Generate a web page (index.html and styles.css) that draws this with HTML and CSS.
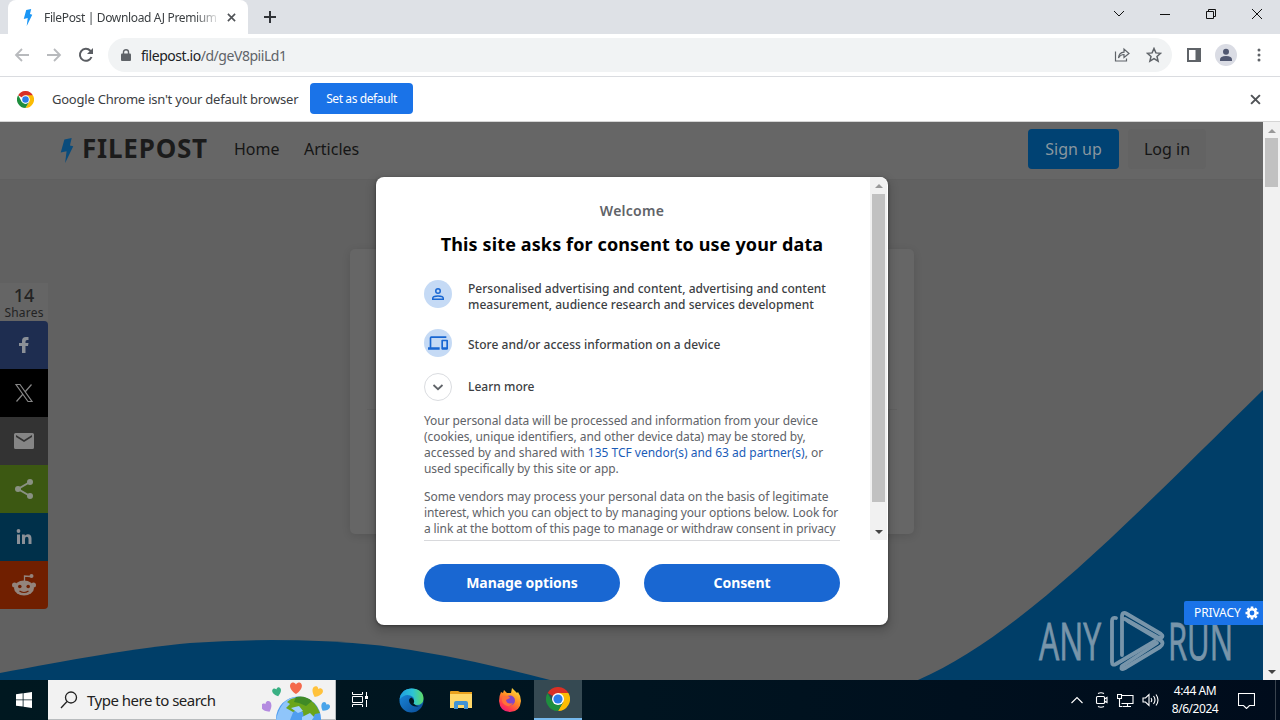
FILE: index.html
```html
<!DOCTYPE html>
<html lang="en">
<head>
<meta charset="utf-8">
<title>FilePost | Download AJ Premium</title>
<link rel="stylesheet" href="styles.css">
</head>
<body>
<svg class="defs" width="0" height="0" aria-hidden="true">
  <defs>
    <symbol id="bolt" viewBox="0 0 12 24"><path d="M3.5 1.5 10.5 0 8.8 7.2 12 8 4.2 24 5.6 12.8 0 14z"/></symbol>
    <symbol id="cross" viewBox="0 0 10 10"><path d="M1 1l8 8M9 1l-8 8"/></symbol>
    <symbol id="chrome" viewBox="0 0 24 24">
      <path fill="#d93025" d="M12 12 1.6 6A12 12 0 0 1 22.4 6z"/>
      <path fill="#fbbc04" d="M12 12V6h10.4A12 12 0 0 1 12 24l5.2-9z"/>
      <path fill="#1e8e3e" d="M1.6 6 6.8 15 12 18l5.2-3L12 24A12 12 0 0 1 1.6 6z"/>
      <circle cx="12" cy="12" r="6" fill="#fff"/>
      <circle cx="12" cy="12" r="4.6" fill="#2b7de9"/>
    </symbol>
  </defs>
</svg>
<div class="screen">
  <header class="tabstrip">
    <div class="tab">
      <svg class="tab-bolt" width="10" height="17"><use href="#bolt"/></svg>
      <span class="tab-title">FilePost | Download AJ Premium</span>
      <svg class="tab-close" width="9" height="9"><use href="#cross"/></svg>
    </div>
    <svg class="new-tab" width="12" height="12" viewBox="0 0 12 12"><path d="M6 0v12M0 6h12"/></svg>
    <div class="window-buttons">
      <svg width="12" height="12" viewBox="0 0 12 12"><path d="M1 3l5 5 5-5"/></svg>
      <svg width="12" height="12" viewBox="0 0 12 12"><path d="M1 6.5h10"/></svg>
      <svg width="12" height="12" viewBox="0 0 12 12"><path d="M1.5 3.5h7v7h-7zM3.5 3.500v-2h7v7h-2"/></svg>
      <svg width="12" height="12" viewBox="0 0 12 12"><path d="M1 1l10 10M11 1 1 11"/></svg>
    </div>
  </header>
  <nav class="toolbar">
    <svg class="nav-arrow" width="16" height="16" viewBox="0 0 16 16"><path d="M15 8H2M8 2 2 8l6 6"/></svg>
    <svg class="nav-arrow" width="16" height="16" viewBox="0 0 16 16"><path d="M1 8h13M8 2l6 6-6 6"/></svg>
    <svg class="reload" width="16" height="16" viewBox="0 0 16 16"><path d="M13.500 10a6 6 0 1 1-1.200-6.300L14 5.500"/><path class="reload-tip" d="M15 1v6H9z"/></svg>
    <div class="omnibox">
      <svg width="10" height="12" viewBox="0 0 10 12"><path fill="#5f6368" d="M1 4.500h8q1 0 1 1V11q0 1-1 1H1q-1 0-1-1V5.500q0-1 1-1z"/><path fill="none" stroke="#5f6368" stroke-width="1.400" d="M2.500 5V3a2.500 2.300 0 0 1 5 0v2"/></svg>
      <span class="url"><b>filepost.io</b>/d/geV8piiLd1</span>
      <svg class="share" width="16" height="16" viewBox="0 0 16 16"><path d="M1.500 4.500v9.500h11V11.500M4.500 11Q5 5.500 10 5.200V2l5 4.500-5 4V7.500Q6.500 7.500 4.500 11z"/></svg>
      <svg class="star" width="16" height="16" viewBox="0 0 16 16"><path d="M8 1.500l1.900 4.400 4.700.4-3.600 3.200 1.100 4.700L8 11.700l-4.100 2.500L5 9.500 1.400 6.300l4.700-.4z"/></svg>
    </div>
    <svg class="panel" width="14" height="14" viewBox="0 0 14 14"><path fill="#5f6368" fill-rule="evenodd" d="M0 0h14v14H0zM2 2v10h6.500V2z"/></svg>
    <svg class="avatar" width="22" height="22" viewBox="0 0 22 22"><circle cx="11" cy="11" r="11" fill="#dadce4"/><circle cx="11" cy="7.800" r="3" fill="#505770"/><path fill="#505770" d="M5 17v-1.500q0-3.500 6-3.500t6 3.500V17z"/></svg>
    <svg class="kebab" width="4" height="14" viewBox="0 0 4 14"><circle cx="2" cy="2" r="1.500"/><circle cx="2" cy="7" r="1.500"/><circle cx="2" cy="12" r="1.500"/></svg>
  </nav>
  <div class="infobar">
    <svg width="17" height="17"><use href="#chrome"/></svg>
    <span class="infobar-text">Google Chrome isn't your default browser</span>
    <button class="default-button"><span>Set as default</span></button>
    <svg class="infobar-close" width="11" height="11"><use href="#cross"/></svg>
  </div>

  <div class="viewport">
    <main class="page">
      <svg class="waves" width="1263" height="558" viewBox="0 122 1263 558">
        <path fill="#003e68" d="M0 673C70 660 135 648 190 643Q285 636 380 645.500Q460 656 550 680H0z"/>
        <path fill="#003e68" d="M918 680C1020 635 1120 530 1263 390V680z"/>
      </svg>
      <div class="site-nav">
        <svg class="site-bolt" width="14" height="25"><use href="#bolt"/></svg>
        <strong class="brand">FILEPOST</strong>
        <a class="home">Home</a>
        <a class="articles">Articles</a>
        <a class="signup"><span>Sign up</span></a>
        <a class="login"><span>Log in</span></a>
      </div>
      <div class="card"><div class="card-top"></div></div>

      <aside class="share-rail">
        <div class="share-count"><b>14</b><span>Shares</span></div>
        <div class="rail-item facebook"><svg width="24" height="24" viewBox="0 0 24 24"><path d="M10 20v-7H7v-3h3V8q0-4 4-4h2.500v3H15q-1.500 0-1.500 1.500V10h3l-.5 3h-2.500v7z"/></svg></div>
        <div class="rail-item x"><svg width="24" height="24" viewBox="0 0 24 24"><path fill="none" stroke="#868686" stroke-width="1.200" d="M4 3.500h4L20 20.500h-4zM19.500 3.500 13 11M11 13l-6.500 7.500"/></svg></div>
        <div class="rail-item mail"><svg width="24" height="24" viewBox="0 0 24 24"><path fill-rule="evenodd" d="M3.500 4h17q1.500 0 1.500 1.500v13q0 1.500-1.500 1.500h-17Q2 20 2 18.500v-13Q2 4 3.500 4zM4 6v2l8 5 8-5V6l-8 5z"/></svg></div>
        <div class="rail-item sharethis"><svg width="24" height="24" viewBox="0 0 24 24"><path fill="none" stroke="#8a9183" stroke-width="2" d="M18 5 6 12l12 7"/><circle cx="18" cy="5" r="3"/><circle cx="6" cy="12" r="3"/><circle cx="18" cy="19" r="3"/></svg></div>
        <div class="rail-item linkedin"><svg width="24" height="24" viewBox="0 0 24 24"><circle cx="6.500" cy="6" r="1.900"/><path d="M5 9.500h3V19H5zM10 9.500h2.800v1.300q1-1.600 3-1.600 3.700 0 3.700 4.300V19h-3v-5q0-2.300-1.700-2.300-1.800 0-1.800 2.300v5h-3z"/></svg></div>
        <div class="rail-item reddit"><svg width="24" height="24" viewBox="0 0 24 24"><path fill="none" stroke="#93847c" stroke-width="1.300" d="M12.500 9V3l6 .5"/><circle cx="19.500" cy="3" r="2"/><circle cx="2.500" cy="12" r="2.500"/><circle cx="21.500" cy="12" r="2.500"/><ellipse cx="12" cy="15" rx="10" ry="7.500"/><g fill="#701f00"><circle cx="7.800" cy="13.500" r="1.800"/><circle cx="16.200" cy="13.500" r="1.800"/></g><path fill="none" stroke="#701f00" stroke-width="1.200" d="M7.500 18q4.500 3 9 0"/></svg></div>
      </aside>

      <svg class="watermark" width="200" height="70" viewBox="1035 605 200 70">
        <g font-family="Open Sans" font-size="51" fill="#7895aa" stroke="#7895aa" stroke-width=".9">
          <text x="1039" y="659.500" textLength="62" lengthAdjust="spacingAndGlyphs">ANY</text>
          <text x="1168" y="659.500" textLength="65" lengthAdjust="spacingAndGlyphs">RUN</text>
        </g>
        <g fill="none" stroke="#7895aa" stroke-width="3.800" stroke-linejoin="round" stroke-linecap="round">
          <path d="M1116 618q-4-1-4 3v41q0 4 4 2l39-23"/>
          <path d="M1122 655v-38q0-6 5-3l34 20q3 2 0 4l-4-1-32-18"/>
          <path d="M1125 668l35-21q5-4 0-7l-32-19"/>
          <path d="M1125 668q-5 3-3-2l35-23"/>
        </g>
      </svg>
      <a class="privacy"><span>PRIVACY</span><svg width="14" height="14" viewBox="0 0 14 14"><circle cx="7" cy="7" r="3.700" fill="none" stroke="#fff" stroke-width="2.600"/><g stroke="#fff" stroke-width="2.600"><path d="M7 .5v2M7 11.500v2M.5 7h2M11.500 7h2M2.400 2.400l1.400 1.400M10.200 10.200l1.400 1.400M11.600 2.400l-1.400 1.400M3.800 10.200l-1.400 1.400"/></g></svg></a>

      <section class="dialog">
        <div class="dialog-scroll">
          <div class="dialog-body">
            <p class="welcome"><span>Welcome</span></p>
            <h1><span>This site asks for consent to use your data</span></h1>
            <ul class="purposes">
              <li class="two-line"><i class="disc"><svg width="18" height="18" viewBox="0 0 24 24"><path fill="none" stroke="#1967d2" stroke-width="2" d="M12 5a3 3 0 1 1 0 6 3 3 0 0 1 0-6zM5 19v-1.500q0-3 7-3t7 3V19z"/></svg></i>
                <span>Personalised advertising and content, advertising and content<br>measurement, audience research and services development</span></li>
              <li class="store"><i class="disc"><svg width="20" height="20" viewBox="0 0 24 24"><path fill="#1967d2" d="M4 6h18V4H4q-2 0-2 2v11H0v3h14v-3H4zM23 8h-6q-1 0-1 1v10q0 1 1 1h6q1 0 1-1V9q0-1-1-1zm-1 9h-4v-7h4z"/></svg></i><span>Store and/or access information on a device</span></li>
              <li class="learn"><i class="disc outline"><svg width="12" height="12" viewBox="0 0 12 12"><path fill="none" stroke="#5f6368" stroke-width="1.800" d="M1.500 4 6 8.200 10.500 4"/></svg></i><span>Learn more</span></li>
            </ul>
            <p class="legal">Your personal data will be processed and information from your device<br>(cookies, unique identifiers, and other device data) may be stored by,<br><span class="normal">accessed by and shared with <a>135 TCF vendor(s) and 63 ad partner(s)</a>, or</span><br>used specifically by this site or app.</p>
            <p class="legal">Some vendors may process your personal data on the basis of legitimate<br><span class="snug">interest, which you can object to by managing your options below. Look for</span><br><span class="snug">a link at the bottom of this page to manage or withdraw consent in privacy</span></p>
          </div>
          <div class="scrollbar inner"><i class="up"></i><i class="thumb"></i><i class="down"></i></div>
        </div>
        <div class="actions"><button><span>Manage options</span></button><button><span>Consent</span></button></div>
      </section>
    </main>
    <div class="scrollbar outer"><i class="up"></i><i class="thumb"></i><i class="down"></i></div>
  </div>

  <footer class="taskbar">
    <div class="start"><svg width="16" height="16" viewBox="0 0 16 16"><path fill="#fff" d="M0 2.300 6.700 1.300V7.500H0zM7.500 1.200 16 0v7.500H7.500zM0 8.300h6.700v6.300L0 13.700zM7.500 8.300H16V16l-8.500-1.200z"/></svg></div>
    <div class="search">
      <svg width="18" height="18" viewBox="0 0 18 18"><circle cx="11" cy="6.500" r="5.500"/><path d="M7 10.500l-6 6.500"/></svg>
      <span>Type here to search</span>
      <svg class="globe" width="74" height="40" viewBox="0 0 74 40">
        <defs><path id="heart" d="M0 6C-9 0-6-6-2.500-5.500-1-5.300 0-3.500 0-3.500S1-5.300 2.500-5.500C6-6 9 0 0 6z"/></defs>
        <circle cx="36.500" cy="39" r="22.500" fill="#4f9df0"/>
        <path fill="#8fc5fa" d="M15 36q5-17 18-19l-5 8 4 5-4 10H14z"/>
        <path fill="#6aa51c" d="M29 19q17-6 26 8l3 6-5 1-3 6h-8l-1-8-6-2-4 2-7-4 4-4-3-2z"/>
        <path fill="#3f8a26" d="M34 17q9-2 16 4l-6 5-7-3-5-1z"/>
        <path fill="#9fd0ff" d="M29 28l8-2 4 5-5 2zM40 37l8-4 4 4-2 3h-10z"/>
        <use href="#heart" fill="#f4694c" transform="translate(34 8)"/>
        <use href="#heart" fill="#3ab083" transform="translate(15 12) rotate(-15) scale(.75)"/>
        <use href="#heart" fill="#ffc23c" transform="translate(55 12) rotate(25) scale(.9)"/>
        <use href="#heart" fill="#b48be0" transform="translate(5 27) rotate(-28) scale(.9)"/>
        <use href="#heart" fill="#48a4ea" transform="translate(63 27) rotate(32) scale(.75)"/>
      </svg>
    </div>
    <div class="apps">
      <div class="app"><svg width="18" height="18" viewBox="0 0 18 18"><path fill="none" stroke="#fff" d="M1.500 1v2.500h10V1M1.500 16v-2.500h10V16M1.500 5.500h10v6h-10zM15.500 1v4M15.500 9v7"/><path fill="#fff" d="M14 5h3v3h-3z"/></svg></div>
      <div class="app edge"><svg width="25" height="25" viewBox="0 0 25 25"><defs><linearGradient id="edge-top" x1="0" x2="1"><stop stop-color="#1f9de0"/><stop offset=".55" stop-color="#2cc3d6"/><stop offset="1" stop-color="#5edb66"/></linearGradient><linearGradient id="edge-low" x1="0" x2="1" y2="1"><stop stop-color="#1a8ce0"/><stop offset="1" stop-color="#0a4a94"/></linearGradient></defs><circle cx="12.500" cy="12.500" r="12" fill="url(#edge-low)"/><path fill="url(#edge-top)" d="M.5 11.500Q2 .5 12.500.5 24.500 1 24.500 11q-.5 6-7 6-4.500 0-3.500-2.500 2-3 0-5.500Q7 4 .5 11.500z"/><path fill="#001620" d="M12.500 9.500q-3.500 1-2 5 3 6 12.500 3-5 2-8.500-2 2-3-2-6z"/></svg></div>
      <div class="app"><svg width="22" height="19" viewBox="0 0 22 19"><path fill="#e9a21f" d="M0 1q0-1 1-1h7l2 1h12v3H0z"/><path fill="#ffd869" d="M0 3h22v14H0z"/><path fill="#4294d4" d="M4 18V12q0-2 2-2h10q2 0 2 2v6h-4v-4H8v4z"/></svg></div>
      <div class="app"><svg width="24" height="24" viewBox="0 0 24 24"><defs><linearGradient id="fox" x1=".8" y1="0" x2=".2" y2="1"><stop stop-color="#ffe23c"/><stop offset=".45" stop-color="#ff8a24"/><stop offset=".8" stop-color="#ff3650"/><stop offset="1" stop-color="#e31587"/></linearGradient></defs><path fill="url(#fox)" d="M3 4l2 1 1-3 3 3 4 0 1-5 4 4 1 1 1-1q3 4 3 9-1 11-11 11T1 13Q1 8 3 4z"/><circle cx="12" cy="12.500" r="5" fill="#8146c9"/><path fill="#ff7139" d="M5 8q6-1 7 2l-4 2q1 5 7 3-3 5-8 2T5 8z"/></svg></div>
      <div class="app active"><svg width="24" height="24"><use href="#chrome"/></svg></div>
    </div>
    <div class="tray">
      <svg width="14" height="14" viewBox="0 0 14 14"><path d="M1.500 10 7 4.500l5.500 5.500"/></svg>
      <svg width="14" height="16" viewBox="0 0 14 16"><path d="M2.500 4.500h6q1 0 1 1v5q0 1-1 1h-6q-1 0-1-1v-5q0-1 1-1zM9.500 7l2.500-1.500v5L9.500 9M3 1.500q3-1.500 6 0M3 14.500q3 1.500 6 0"/></svg>
      <svg width="17" height="16" viewBox="0 0 17 16"><path d="M5 3.500h11v8H4.500M10.500 11.500v3M6 14.500h8M.5 2.500h4v4h-4zM2.500 6.500v8h3"/></svg>
      <svg width="17" height="16" viewBox="0 0 17 16"><path d="M1 6h2.500L7 2.500v11L3.500 10H1zM9 6q1.500 2 0 4M11.500 4q3 4 0 8M14 2.500q4 5.500 0 11"/></svg>
      <div class="clock"><span>4:44 AM</span><span>8/6/2024</span></div>
      <svg width="17" height="17" viewBox="0 0 17 17"><path d="M.5 1.500h16v12h-5l-3 3-3-3h-5z"/></svg>
      <i class="peek"></i>
    </div>
  </footer>
</div>
</body>
</html>
```
FILE: styles.css
```css
* { box-sizing: border-box; }
body { margin: 0; font-family: "Noto Sans", "Open Sans", sans-serif; overflow: hidden; }
svg { display: block; flex: none; }
p, h1, ul { margin: 0; padding: 0; font-weight: 400; }
button { border: 0; padding: 0; font: inherit; color: #fff; }
.defs { position: absolute; }
.screen { width: 1280px; height: 720px; display: flex; flex-direction: column; background: #fff; white-space: nowrap; }

.tabstrip { height: 34px; background: #dee1e6; display: flex; align-items: center; padding-left: 8px; }
.tab { width: 240px; height: 34px; background: #fff; border-radius: 8px 8px 0 0; display: flex; align-items: center; padding: 0 12px 0 15px; }
.tab-bolt { fill: #1a96f5; }
.tab-title { width: 173px; margin-left: 11px; overflow: hidden; font-size: 12px; letter-spacing: -.35px; color: #3c4043; -webkit-mask-image: linear-gradient(90deg, #000 150px, rgba(0,0,0,.15) 173px); mask-image: linear-gradient(90deg, #000 150px, rgba(0,0,0,.15) 173px); }
.tab-close, .infobar-close { stroke: #505357; stroke-width: 1.800; }
.tab-close { margin-left: 11px; }
.new-tab { margin-left: 16px; stroke: #303338; stroke-width: 2; }
.window-buttons { margin-left: auto; display: flex; gap: 34px; padding: 0 17px 6px 0; fill: none; stroke: #111; }

.toolbar { height: 43px; border-bottom: 1px solid #dadce0; display: flex; align-items: center; padding-left: 14px; }
.nav-arrow { fill: none; stroke: #b8babd; stroke-width: 1.800; margin-right: 16px; }
.reload { fill: none; stroke: #5a5d62; stroke-width: 2; }
.reload-tip { fill: #5a5d62; stroke: none; }
.omnibox { margin-left: 14px; width: 1064px; height: 34px; border-radius: 17px; background: #f1f3f4; display: flex; align-items: center; padding: 0 10px 0 13px; }
.url { margin-left: 10px; font-size: 14px; letter-spacing: -.45px; color: #5f6368; }
.url b { font-weight: 400; color: #202124; }
.share { margin-left: auto; fill: none; stroke: #5f6368; stroke-width: 1.200; }
.star { margin-left: 16px; fill: none; stroke: #5f6368; stroke-width: 1.500; }
.panel { margin-left: 15px; }
.avatar { margin-left: 14px; }
.kebab { margin-left: 20px; fill: #5f6368; }

.infobar { height: 45px; border-bottom: 1px solid #d5d5d5; display: flex; align-items: center; padding: 0 19px 0 17px; }
.infobar-text { margin-left: 18px; width: 258px; font-size: 13px; letter-spacing: -.23px; color: #3c4043; }
.default-button { width: 103px; height: 31px; margin-bottom: 2px; border-radius: 4px; background: #1a73e8; font-size: 12px; letter-spacing: -.4px; }
.infobar-close { margin-left: auto; }

.viewport { height: 558px; display: flex; }
.page { position: relative; width: 1263px; height: 558px; background: #616161; overflow: hidden; }
.waves { position: absolute; left: 0; top: 0; }
.site-nav { position: relative; height: 58px; background: #666; border-bottom: 1px solid #5f5f5f; display: flex; align-items: center; padding: 0 57px 4px 60px; color: #151515; font-size: 16px; }
.site-bolt { margin-top: 4px; fill: #0a4c7c; }
.brand { width: 152px; margin: -1px 0 0 8px; font-size: 26px; line-height: 36px; letter-spacing: .8px; color: #1b1b1b; }
.home { width: 70px; }
.signup, .login { height: 40px; display: flex; align-items: center; justify-content: center; border-radius: 4px; }
.signup { margin-left: auto; width: 91px; background: #004273; color: #8a979f; }
.login { width: 78px; margin-left: 9px; background: #636363; }
.card { position: relative; width: 564px; height: 285px; margin: 69px 0 0 350px; background: #666; border-radius: 5px; box-shadow: 0 2px 8px rgba(0,0,0,.12); }
.card-top { height: 161px; margin: 0 17px; border-bottom: 1px solid #606060; }

.share-rail { position: absolute; left: 0; top: 161px; width: 48px; }
.share-count { height: 38px; background: #656565; color: #232323; display: flex; flex-direction: column; align-items: center; }
.share-count b { font-size: 18px; line-height: 24px; font-weight: 500; }
.share-count span { font-size: 12px; line-height: 11px; letter-spacing: .2px; }
.rail-item { height: 48px; display: flex; align-items: center; justify-content: center; fill: #8b9097; }
.facebook { background: #1e2d50; border-top-right-radius: 4px; }
.x { background: #000; }
.mail { background: #333; fill: #858585; }
.sharethis { background: #3c5812; fill: #8a9183; }
.linkedin { background: #00304a; }
.reddit { background: #701f00; fill: #93847c; border-bottom-right-radius: 4px; }

.watermark { position: absolute; left: 1035px; top: 483px; }
.privacy { position: absolute; right: 0; top: 479px; width: 79px; height: 24px; background: #1a73e8; color: #fff; font-size: 12px; letter-spacing: -.1px; display: flex; align-items: center; justify-content: space-between; padding: 0 4px 1px 10px; border-radius: 2px 0 0 2px; }

.dialog { position: absolute; left: 376px; top: 55px; width: 512px; height: 448px; border-radius: 8px; background: #fff; box-shadow: 0 1px 3px rgba(0,0,0,.4), 0 4px 8px 3px rgba(0,0,0,.15); }
.dialog-scroll { height: 364px; display: flex; padding-right: 1px; }
.dialog-body { width: 416px; height: 364px; margin-left: 48px; padding-top: 23px; border-bottom: 1px solid #d8d9dc; }
.welcome { height: 22px; line-height: 22px; text-align: center; font-size: 14px; font-weight: 600; letter-spacing: .25px; color: #5f6368; }
h1 { height: 24px; margin-top: 10px; line-height: 24px; text-align: center; font-size: 18px; font-weight: 700; letter-spacing: .12px; color: #000; }
.purposes { list-style: none; margin-top: 24px; font-size: 12px; line-height: 16px; letter-spacing: .02px; color: #3c4043; font-weight: 500; }
.purposes li { display: flex; align-items: center; gap: 16px; height: 28px; }
.purposes .two-line { height: 32px; align-items: flex-start; }
.two-line > span { margin-top: 1px; }
.purposes .store { margin-top: 17px; }
.store span { margin-top: 3px; }
.purposes .learn { margin-top: 16px; }
.disc { width: 28px; height: 28px; border-radius: 50%; background: #c5daf5; display: flex; align-items: center; justify-content: center; flex: none; }
.outline { background: #fff; border: 1px solid #dadce0; }
.legal { margin-top: 12px; font-size: 12px; line-height: 16px; letter-spacing: -.075px; color: #5f6368; }
.normal { letter-spacing: -.01px; }
.snug { letter-spacing: -.115px; }
.legal a { color: #1a5cb8; }
.actions { display: flex; gap: 24px; padding: 23px 48px; }
.actions button { width: 196px; height: 38px; padding-bottom: 2px; border-radius: 19px; background: #1967d2; font-size: 14px; font-weight: 700; letter-spacing: -.08px; }

.scrollbar { width: 17px; background: #f1f1f1; display: flex; flex-direction: column; align-items: center; }
.scrollbar i { display: block; }
.inner { margin-left: auto; height: 363px; border-top-right-radius: 7px; }
.outer { height: 558px; }
.up { margin-top: 7px; border: 4px solid transparent; border-top: 0; border-bottom-color: #999; }
.down { margin-top: auto; margin-bottom: 6px; border: 4px solid transparent; border-bottom: 0; border-top-color: #444; }
.thumb { width: 13px; margin-top: 6px; background: #c1c1c1; }
.inner .thumb { height: 308px; }
.outer .thumb { height: 49px; margin-top: 5px; }

.taskbar { height: 40px; background: linear-gradient(90deg, #001820 0, #001420 50%, #000c1c 100%); display: flex; }
.start { width: 48px; display: flex; align-items: center; justify-content: center; }
.search { width: 288px; background: #f2f2f2; border: solid #b8bcbe; border-width: 0 1px 1px 0; display: flex; align-items: center; padding-left: 12px; color: #222; }
.search > svg:first-child { fill: none; stroke: #222; stroke-width: 1.300; }
.search span { margin-left: 9px; font-size: 15px; letter-spacing: -.5px; }
.globe { margin-left: auto; margin-right: -1px; }
.apps { display: flex; }
.app { width: 48px; display: flex; align-items: center; justify-content: center; }
.app:nth-child(n+2) { width: 49px; }
.edge { margin-left: 3px; }
.active { background: #354952; border-bottom: 2px solid #76b9ed; }
.app.active { width: 48px; }
.tray { margin-left: auto; display: flex; align-items: center; color: #fff; fill: none; stroke: #fff; stroke-width: 1.100; }
.tray svg + svg { margin-left: 8px; }
.tray svg:nth-child(2) { margin-left: 11px; }
.clock { width: 72px; margin-right: 7px; display: flex; flex-direction: column; align-items: center; font-size: 12px; line-height: 18px; letter-spacing: -.45px; }
.peek { width: 1px; height: 40px; margin-left: 20px; margin-right: 4px; background: #39434e; }
```
